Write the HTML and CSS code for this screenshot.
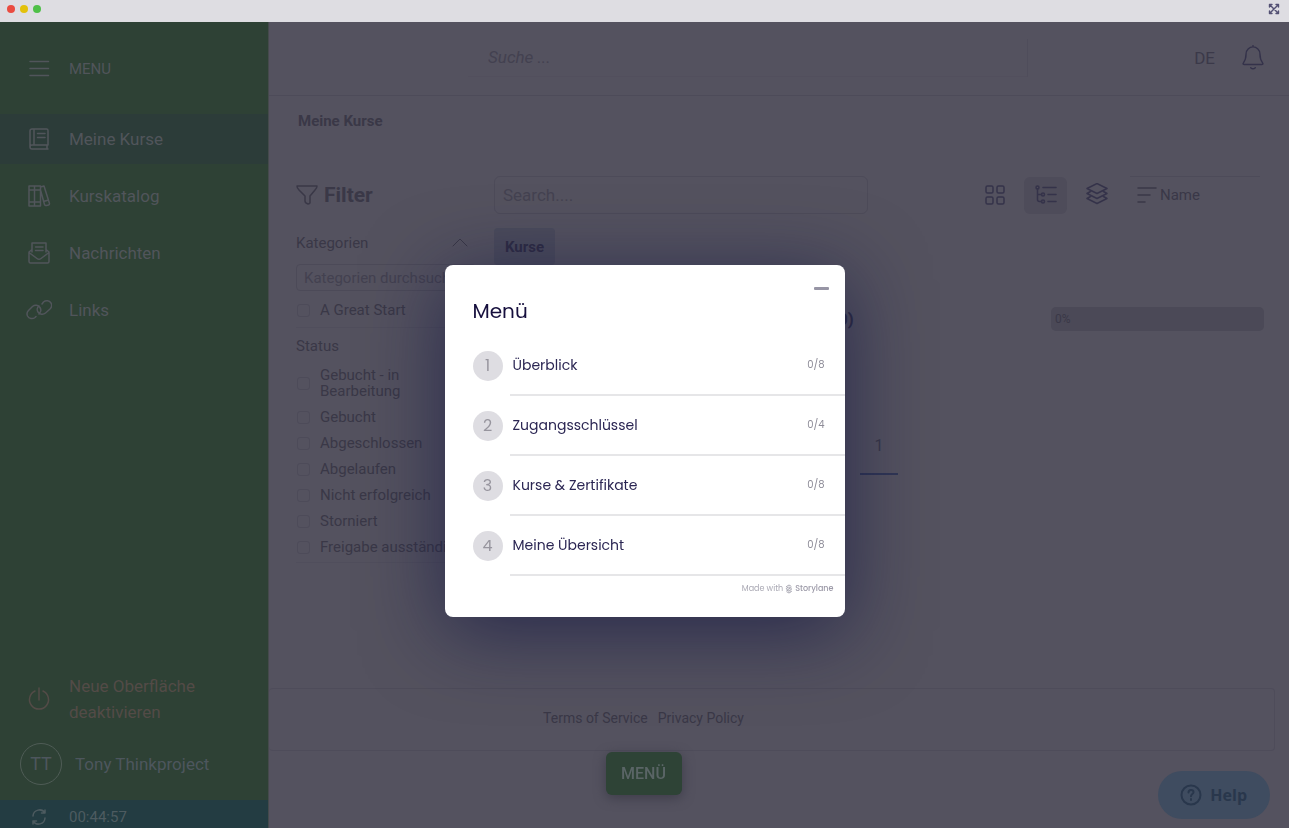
FILE: index.html
```html
<!DOCTYPE html>
<html lang="de">
<head>
<meta charset="utf-8">
<meta name="viewport" content="width=device-width, initial-scale=1">
<title>Meine Kurse</title>
<link rel="stylesheet" href="styles.css">
</head>
<body>
<div class="window-bar">
  <span class="dot dot-red"></span><span class="dot dot-yellow"></span><span class="dot dot-green"></span>
  <button class="expand" type="button" aria-label="Vollbild">
    <svg width="12" height="12" viewBox="0 0 12 12"><path d="M1.500 4V1.500H4M8 1.500h2.500V4M10.500 8v2.500H8M4 10.500H1.500V8M2 2l8 8M10 2l-8 8" fill="none" stroke="currentColor" stroke-width="1.4"/></svg>
  </button>
</div>
<div class="app">
  <nav class="sidebar">
    <button class="menu-toggle" type="button">
      <svg class="icon" viewBox="0 0 26 26"><path d="M4 5.500h18.500M4 12.500h18.500M4 19.500h18.500"/></svg>MENU
    </button>
    <a class="nav-item active" href="#"><svg class="icon" viewBox="0 0 26 26"><path d="M6 3h14.500a1.500 1.500 0 0 1 1.500 1.500V19H6a2 2 0 0 0-2 2V5a2 2 0 0 1 2-2zM4 21a2 2 0 0 0 2 2h16M21 19v4M8 3v16M11.500 7.500h7.500M11.500 11.500h7.500"/></svg>Meine Kurse</a>
    <a class="nav-item" href="#"><svg class="icon" viewBox="0 0 26 26"><path d="M3 3h5.500v20H3zM8.500 3h6v20h-6zM3 7h11.500M3 19h11.500M14.500 4l3.500-1 5.500 17.500a1.500 1.500 0 0 1-1 1.500l-2 .5a1.500 1.500 0 0 1-2-1L14.500 7M17.500 18.500l5-1.500"/></svg>Kurskatalog</a>
    <a class="nav-item" href="#"><svg class="icon" viewBox="0 0 26 26"><path d="M6 12V3h14v9M9.500 7h7.500M9.500 10.500h7.500M6 9.500l-3 2.500v9.500A1.500 1.500 0 0 0 4.500 23h17a1.500 1.500 0 0 0 1.500-1.500V12l-3-2.500M3 12.500l8 6q2 1.500 4 0l8-6"/></svg>Nachrichten</a>
    <a class="nav-item" href="#"><svg class="icon" viewBox="0 0 26 26"><path d="M10 19.500l-1 1a5 5 0 0 1-7.500-1.500 5 5 0 0 1 1-5.500l4-4a5 5 0 0 1 7.500 1c1.500 2.500.5 5-1 6.500M16 7l1.500-2a5 5 0 0 1 7.500 1 5 5 0 0 1-1 6l-4.500 4a5 5 0 0 1-7.500-1c-1.500-2.500-.5-5 1-6"/></svg>Links</a>
    <div class="sidebar-end">
      <a class="switch-ui" href="#"><svg class="icon" viewBox="0 0 26 26"><path d="M9 5a9.500 9.500 0 1 0 8 0M13 2v12"/></svg><span>Neue Oberfläche deaktivieren</span></a>
      <a class="user" href="#"><span class="avatar">TT</span>Tony Thinkproject</a>
      <div class="timer"><svg class="icon" viewBox="0 0 26 26"><path d="M7 12a6.500 6.500 0 0 1 12-3v-3M19 9h-3.500M19 14a6.500 6.500 0 0 1-12 3v3M7 17h3.500"/></svg>00:44:57</div>
    </div>
  </nav>
  <div class="page">
    <header class="top">
      <input class="site-search" type="search" placeholder="Suche ..." aria-label="Suche">
      <button class="lang" type="button">DE</button>
      <button class="bell" type="button" aria-label="Benachrichtigungen"><svg width="24" height="26" viewBox="0 0 26 28"><path d="M13 2a7.500 7.500 0 0 1 7.500 7.500c0 6 1.500 8 3 10 .6.800 0 1.500-1 1.500h-19c-1 0-1.600-.7-1-1.500 1.500-2 3-4 3-10A7.500 7.500 0 0 1 13 2zM13 2V.500M10.500 24.500q2.500 2.500 5 0"/></svg></button>
    </header>
    <main class="content">
      <h1 class="crumb">Meine Kurse</h1>
      <div class="columns">
        <aside class="filters">
          <h2 class="filter-title"><svg width="22" height="22" viewBox="0 0 22 22"><path d="M1 2h20q0 2-2 4l-5 6v7q-1 1-2 1-3-1-3-3v-5L3 6Q1 4 1 2z"/></svg>Filter</h2>
          <button class="group-toggle" type="button">Kategorien<svg width="16" height="10" viewBox="0 0 16 10"><path d="M1 8l7-7 7 7"/></svg></button>
          <input class="cat-search" type="search" placeholder="Kategorien durchsuchen" aria-label="Kategorien durchsuchen">
          <label class="check first"><input type="checkbox"><span>A Great Start</span></label>
          <h3 class="group">Status</h3>
          <div class="checks">
            <label class="check"><input type="checkbox"><span>Gebucht - in Bearbeitung</span></label>
            <label class="check"><input type="checkbox"><span>Gebucht</span></label>
            <label class="check"><input type="checkbox"><span>Abgeschlossen</span></label>
            <label class="check"><input type="checkbox"><span>Abgelaufen</span></label>
            <label class="check"><input type="checkbox"><span>Nicht erfolgreich</span></label>
            <label class="check"><input type="checkbox"><span>Storniert</span></label>
            <label class="check"><input type="checkbox"><span>Freigabe ausständig</span></label>
          </div>
        </aside>
        <section class="results">
          <div class="tools">
            <input class="search" type="search" placeholder="Search...." aria-label="Search">
            <button class="view" type="button" aria-label="Kacheln"><svg width="24" height="24" viewBox="0 0 24 24"><rect x="3" y="3" width="7" height="7" rx="1.500"/><rect x="14" y="3" width="7" height="7" rx="1.500"/><rect x="3" y="14" width="7" height="7" rx="1.500"/><rect x="14" y="14" width="7" height="7" rx="1.500"/></svg></button>
            <button class="view on" type="button" aria-label="Baum"><svg width="24" height="24" viewBox="0 0 24 24"><circle cx="3.500" cy="4.500" r="1.500"/><circle cx="9" cy="11.500" r="1.500"/><circle cx="9" cy="18.500" r="1.500"/><path d="M3.500 6v10.500q0 2 2 2h2M3.500 11.500h4M9 4.500h13M14 11.500h8M14 18.500h8"/></svg></button>
            <button class="view" type="button" aria-label="Ebenen"><svg width="24" height="24" viewBox="0 0 24 24"><path d="M12 .500l10 5-10 5-10-5zM5.500 8.500L2 10.500l10 5 10-5-3.500-2M5.500 13.500L2 15.500l10 5 10-5-3.500-2"/></svg></button>
            <label class="sort"><svg width="20" height="20" viewBox="0 0 20 20"><path d="M1 3h18M1 10h12M1 17h7"/></svg><select aria-label="Sortierung"><option>Name</option></select></label>
          </div>
          <button class="tab" type="button">Kurse</button>
          <div class="course"><span class="course-title">(0)</span><div class="progress">0%</div></div>
          <div class="pager"><button type="button">1</button></div>
        </section>
      </div>
    </main>
    <footer class="footer"><a href="#">Terms of Service</a><a href="#">Privacy Policy</a></footer>
  </div>
</div>
<button class="menu-button" type="button">MENÜ</button>
<button class="help" type="button"><svg width="24" height="24" viewBox="0 0 24 24"><circle cx="12" cy="12" r="9.500"/><path d="M9.500 9.500q0-2.500 2.500-2.500t2.500 2.200c0 1.800-2.500 1.800-2.500 4M12 16v1"/></svg>Help</button>
<div class="overlay">
  <section class="guide" role="dialog" aria-labelledby="guide-title">
    <button class="minimize" type="button" aria-label="Minimieren"></button>
    <h2 class="guide-title" id="guide-title">Menü</h2>
    <ol class="steps">
      <li class="step"><span class="num">1</span><button type="button">Überblick<small>0/8</small></button></li>
      <li class="step"><span class="num">2</span><button type="button">Zugangsschlüssel<small>0/4</small></button></li>
      <li class="step"><span class="num">3</span><button type="button">Kurse &amp; Zertifikate<small>0/8</small></button></li>
      <li class="step"><span class="num">4</span><button type="button">Meine Übersicht<small>0/8</small></button></li>
    </ol>
    <a class="made" href="#">Made with <svg width="8" height="10" viewBox="0 0 8 10"><path d="M6 2.200L4 1 1.200 2.700 6.500 5.700M1.200 4.500L6.500 7.500 4 9 1.800 7.800M4 3l2.500 1.200M1.500 6l2.500 1.300"/></svg><b>Storylane</b></a>
  </section>
</div>
</body>
</html>
```
FILE: styles.css
```css
* { box-sizing: border-box; }
body {
  margin: 0;
  height: 100vh;
  display: flex;
  flex-direction: column;
  overflow: hidden;
  background: #54525f;
  color: #3a3847;
  font: 14px/16px Roboto, sans-serif;
}
button, input, select { font: inherit; color: inherit; background: none; border: 0; padding: 0; margin: 0; }
a { color: inherit; text-decoration: none; }
h1, h2, h3, ol { margin: 0; padding: 0; list-style: none; }
svg { flex: none; fill: none; stroke: currentColor; stroke-width: 1.5; stroke-linecap: round; stroke-linejoin: round; }
input::placeholder { color: inherit; opacity: 1; }

.window-bar { flex: none; display: flex; align-items: center; gap: 5px; height: 22px; padding: 0 9px 4px 7px; background: #dedde2; }
.dot { width: 8px; height: 8px; border-radius: 50%; }
.dot-red { background: #ea4b40; }
.dot-yellow { background: #e3c10b; }
.dot-green { background: #4fc048; }
.expand { display: flex; margin-left: auto; color: #535073; }

.app { flex: 1; min-height: 0; display: flex; }
.sidebar { flex: none; width: 269px; display: flex; flex-direction: column; gap: 7px; padding-top: 22px; background: #2e4135; color: #51555b; border-right: 1px solid #454a4c; font-weight: 400; line-height: 26px; }
.icon { width: 26px; height: 26px; stroke-width: 1.5; }
.menu-toggle, .nav-item { display: flex; align-items: center; gap: 17px; height: 50px; padding-left: 26px; font-size: 17px; }
.menu-toggle { margin-bottom: 13px; font-size: 15px; }
.active { background: #2c3c39; }
.sidebar-end { margin-top: auto; }
.switch-ui { display: flex; align-items: center; gap: 17px; padding: 0 60px 0 26px; color: #534b47; font-size: 17px; }
.user { display: flex; align-items: center; gap: 13px; padding: 18px 20px 15px; color: #4d565d; font-size: 17px; }
.avatar { display: grid; place-items: center; width: 42px; height: 42px; border: 1px solid #4f5c56; border-radius: 50%; font-size: 18px; }
.timer { display: flex; align-items: center; gap: 17px; height: 28px; padding: 6px 0 0 26px; background: #233c42; font-size: 15px; color: #4d5b60; }

.page { flex: 1; min-width: 0; display: flex; flex-direction: column; }
.top { flex: none; display: flex; align-items: center; height: 74px; padding: 0 24px 2px 0; border-bottom: 1px solid #4d4b59; }
.site-search { flex: 1; max-width: 560px; height: 38px; margin: 0 auto 0 199px; padding-left: 20px; border-right: 1px solid #4f4d5b; border-bottom: 1px solid #524f5d; font-size: 17px; font-style: italic; color: #434150; }
.lang { margin-right: 26px; font-size: 17px; color: #3b3949; }
.bell { display: flex; color: #34324a; }

.content { flex: 1; min-height: 0; padding: 17px 25px 0 27px; }
.crumb { padding-left: 2px; font-size: 15px; line-height: 16px; }
.columns { display: flex; gap: 18px; margin-top: 47px; }
.filters { flex: none; width: 180px; }
.filter-title { display: flex; align-items: center; gap: 6px; height: 38px; font-size: 21px; }
.group-toggle { display: flex; justify-content: space-between; align-items: center; width: 100%; margin: 21px 0 13px; padding-right: 8px; font-size: 15px; }
.group-toggle svg { stroke-width: 1; }
.cat-search { display: block; width: 100%; height: 27px; padding: 0 7px; border: 1px solid #4c4a58; border-radius: 4px; font-size: 15px; color: #434150; }
.check { display: flex; align-items: center; gap: 10px; padding: 0 36px 0 1px; font-size: 15px; line-height: 16px; }
.check input { appearance: none; flex: none; width: 13px; height: 13px; border: 1px solid #4d4b59; border-radius: 3px; }
.first { padding: 11px 0 9px 1px; border-bottom: 1px solid #504e5c; }
.group { margin: 10px 0 13px; font-size: 15px; font-weight: 400; line-height: 16px; }
.checks { display: grid; gap: 10px; padding-bottom: 7px; border-bottom: 1px solid #504e5c; }
.checks .check:not(:first-child) { padding-right: 0; white-space: nowrap; }

.results { flex: 1; min-width: 0; }
.tools { display: flex; align-items: center; height: 38px; padding-right: 4px; }
.search { flex: 1; max-width: 374px; height: 38px; margin-right: auto; padding: 0 8px; border: 1px solid #4d4b59; border-radius: 6px; font-size: 17px; color: #444251; }
.view { display: grid; place-items: center; width: 43px; height: 37px; margin-right: 8px; border-radius: 6px; color: #35334a; }
.on { background: #4e4c5a; }
.sort { display: flex; align-items: center; gap: 1px; width: 130px; height: 38px; margin-left: 4px; padding: 0 0 2px 7px; border-top: 1px solid #4d4b59; color: #3a3848; font-size: 15px; }
.sort select { appearance: none; flex: 1; padding-left: 2px; }
.tab { height: 37px; margin-top: 14px; padding: 0 11px; background: #4b4b5b; border-radius: 4px; font-size: 15px; font-weight: 700; color: #2f2d44; }
.course { display: flex; align-items: center; justify-content: space-between; margin-top: 42px; }
.course-title { padding-left: 338px; font-size: 17px; font-weight: 700; color: #2f2d44; }
.progress { flex: none; width: 213px; height: 24px; padding: 0 4px; background: #4b4957; border-radius: 5px; font-size: 12px; line-height: 24px; }
.pager { display: flex; justify-content: center; margin-top: 88px; }
.pager button { width: 38px; height: 56px; border-bottom: 2px solid #303654; font-size: 16px; }

.footer { flex: none; display: flex; justify-content: center; gap: 10px; height: 63px; margin: 0 14px 77px 0; padding: 21px 256px 0 0; border: 1px solid #4e4c5a; border-left: 0; border-radius: 4px; }

.menu-button { position: fixed; left: 50%; bottom: 33px; width: 76px; height: 43px; margin-left: -39px; border-radius: 6px; background: #2e4336; color: #5a6566; box-shadow: 0 3px 12px #3e3d4a; font-size: 16px; font-weight: 500; }
.help { position: fixed; right: 19px; bottom: 9px; display: flex; align-items: center; gap: 7px; height: 48px; padding: 0 23px 0 21px; border-radius: 24px; background: #3f4c60; color: #29374c; font: 700 16px "Open Sans", sans-serif; }
.help svg { stroke-width: 2; }

.overlay { position: fixed; inset: 54px 0 0; display: flex; align-items: center; justify-content: center; pointer-events: none; }
.guide { display: flex; flex-direction: column; width: 400px; padding: 0 0 18px 28px; background: #fff; border-radius: 8px; box-shadow: 0 14px 80px rgba(16, 18, 65, .65); color: #2b2653; font: 14px/20px Poppins, Inter, sans-serif; pointer-events: auto; }
.minimize { align-self: flex-end; width: 15px; height: 3px; margin: 22px 16px 6px 0; background: #9795a5; border-radius: 1px; }
.guide-title { font-size: 20px; font-weight: 400; line-height: 30px; color: #160f3d; }
.steps { margin-top: 10px; }
.step { display: flex; align-items: center; gap: 7px; }
.num { flex: none; display: grid; place-items: center; width: 30px; height: 30px; border-radius: 50%; background: #dedde2; color: #97959e; font-size: 16px; }
.step button { flex: 1; display: flex; justify-content: space-between; align-items: center; height: 60px; padding: 0 20px 0 3px; border-bottom: 2px solid #e6e6e8; font-size: 14px; }
.step small { font-size: 10px; color: #8e8c98; }
.made { align-self: flex-end; display: flex; align-items: center; gap: 2px; height: 20px; margin: 3px 11px 0 0; color: #aaa9b4; font-size: 8px; }
.made b { font-weight: 500; color: #9c9aa8; }
.made svg { stroke-width: 1; }
```
